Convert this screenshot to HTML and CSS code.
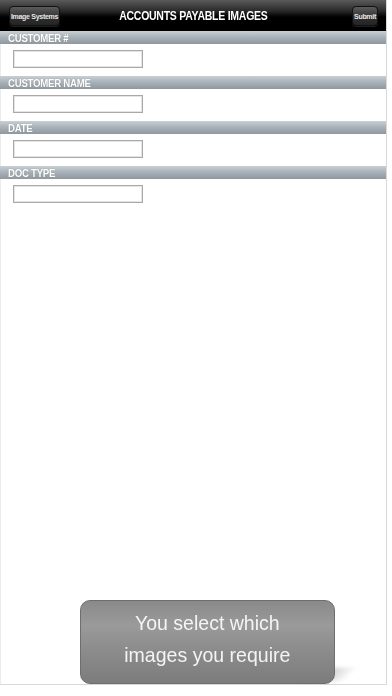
FILE: index.html
```html
<!DOCTYPE html>
<html>
<head>
<meta charset="utf-8">
<link rel="stylesheet" href="styles.css">
</head>
<body>
<div class="frame">
  <header class="topbar">
    <button class="btn btn-left">Image Systems</button>
    <h1 class="title">ACCOUNTS PAYABLE IMAGES</h1>
    <button class="btn btn-right">Submit</button>
  </header>
  <section class="field">
    <div class="bar"><span class="label">CUSTOMER #</span></div>
    <div class="row"><div class="input"></div></div>
  </section>
  <section class="field">
    <div class="bar"><span class="label">CUSTOMER NAME</span></div>
    <div class="row"><div class="input"></div></div>
  </section>
  <section class="field">
    <div class="bar"><span class="label">DATE</span></div>
    <div class="row"><div class="input"></div></div>
  </section>
  <section class="field">
    <div class="bar"><span class="label">DOC TYPE</span></div>
    <div class="row"><div class="input"></div></div>
  </section>
  <div class="callout">
    <div class="shadow"></div>
    <div class="bubble"><span class="bubble-text">You select which<br>images you require</span></div>
  </div>
</div>
</body>
</html>
```
FILE: styles.css
```css
* { box-sizing: border-box; }
html, body { margin: 0; padding: 0; background: #fff; }
body { font-family: "Liberation Sans", Arial, sans-serif; }
.frame {
  position: relative;
  width: 387px;
  height: 685px;
  background: #fff;
  border-right: 1px solid #d8d8d8;
  border-bottom: 1px solid #d8d8d8;
  border-left: 1px solid #ececec;
  display: flex;
  flex-direction: column;
}
.topbar {
  height: 31px;
  background: linear-gradient(#5a5a5a 0%, #2a2a2a 35%, #000 55%, #000 100%);
  display: grid;
  grid-template-columns: 1fr auto 1fr;
  align-items: center;
  padding: 0 8px 0 9px;
  margin-left: -1px;
}
.btn {
  height: 20px;
  margin-top: 1px;
  border: 1px solid #111;
  border-radius: 4px;
  background: linear-gradient(#5c5c5c, #2e2e2e 60%, #252525);
  color: #e8e8e8;
  font-family: "Liberation Sans", Arial, sans-serif;
  font-weight: bold;
  font-size: 7px;
  padding: 0;
  letter-spacing: -0.3px;
  box-shadow: 0 1px 0 rgba(255,255,255,0.12);
}
.btn-left { width: 51px; justify-self: start; }
.btn-right { width: 26px; justify-self: end; }
.title {
  margin: 0;
  color: #fff;
  font-size: 12.5px;
  font-weight: bold;
  letter-spacing: -0.3px;
  transform: scaleX(0.84);
  white-space: nowrap;
  justify-self: center;
}
.field { display: flex; flex-direction: column; height: 45px; }
.bar {
  height: 13px;
  background: linear-gradient(#c9d0d5 0%, #aab3b9 45%, #8f989e 100%);
  display: flex;
  align-items: center;
  padding-left: 8px;
  margin-left: -1px;
}
.label {
  color: #fff;
  font-size: 10.5px;
  font-weight: bold;
  letter-spacing: -0.3px;
  transform: scaleX(0.92);
  transform-origin: left center;
  text-shadow: 0 0 1px rgba(0,0,0,0.3);
}
.row { padding: 6px 0 0 12px; }
.input {
  width: 130px;
  height: 18px;
  background: #fff;
  border: 1px solid #a9a9a9;
  box-shadow: inset 0 0 0 1px #e4e4e4;
}
.callout {
  position: absolute;
  left: 79px;
  top: 600px;
  width: 255px;
  height: 84px;
}
.shadow {
  position: absolute;
  left: 230px;
  bottom: 2px;
  width: 40px;
  height: 14px;
  background: linear-gradient(100deg, rgba(150,150,150,0.8), rgba(200,200,200,0));
  transform: skewX(-40deg);
  filter: blur(2px);
}
.bubble {
  position: relative;
  height: 100%;
  border: 1px solid #6e6e6e;
  border-radius: 10px;
  background: linear-gradient(#8a8a8a 0%, #9a9a9a 30%, #8e8e8e 55%, #7c7c7c 100%);
  display: flex;
  justify-content: center;
  padding-top: 6px;
}
.bubble-text {
  display: block;
  color: #f4f4f4;
  font-family: "Liberation Sans", Arial, sans-serif;
  font-size: 21px;
  line-height: 32px;
  text-align: center;
  white-space: nowrap;
  transform: scaleX(0.93);
}
```
